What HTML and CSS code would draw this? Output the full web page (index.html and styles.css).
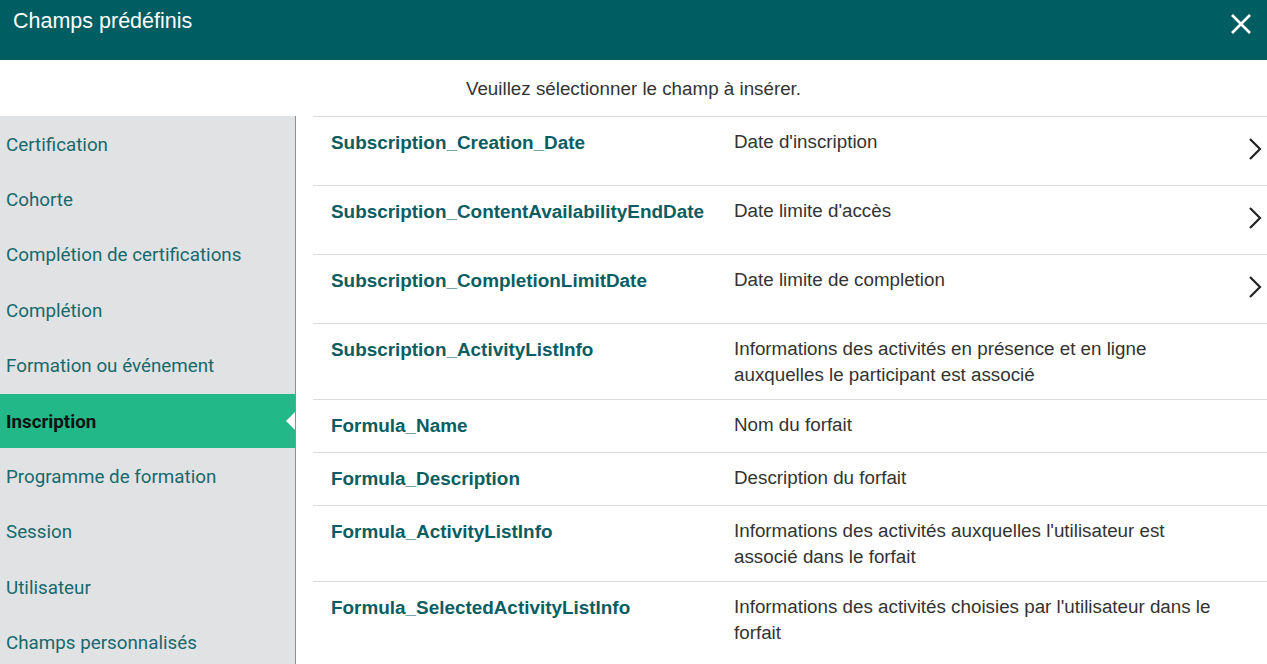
FILE: index.html
```html
<!DOCTYPE html>
<html lang="fr">
<head>
<meta charset="UTF-8">
<title>Champs prédéfinis</title>
<link rel="stylesheet" href="styles.css">
</head>
<body>
    <div class="dialog">
        <div class="dialog-header">
            <span class="dialog-title">Champs prédéfinis</span>
            <button class="close-btn" aria-label="Fermer">
                <svg width="20" height="20" viewBox="0 0 20 20">
                    <path d="M1 1 L19 19 M19 1 L1 19" stroke="#fff" stroke-width="2.6" fill="none"/>
                </svg>
            </button>
        </div>
        <div class="hint">Veuillez sélectionner le champ à insérer.</div>
        <div class="body">
            <ul class="categories">
                <li>Certification</li>
                <li>Cohorte</li>
                <li>Complétion de certifications</li>
                <li>Complétion</li>
                <li>Formation ou événement</li>
                <li class="active">Inscription</li>
                <li>Programme de formation</li>
                <li>Session</li>
                <li>Utilisateur</li>
                <li>Champs personnalisés</li>
            </ul>
            <div class="fields">
                <div class="field">
                    <div class="field-name">Subscription_Creation_Date</div>
                    <div class="field-desc">Date d'inscription</div>
                    <div class="field-more"><svg width="14" height="24" viewBox="0 0 14 24"><path d="M2 2 L12 12 L2 22" stroke="#222" stroke-width="2.2" fill="none"/></svg></div>
                </div>
                <div class="field">
                    <div class="field-name">Subscription_ContentAvailabilityEndDate</div>
                    <div class="field-desc">Date limite d'accès</div>
                    <div class="field-more"><svg width="14" height="24" viewBox="0 0 14 24"><path d="M2 2 L12 12 L2 22" stroke="#222" stroke-width="2.2" fill="none"/></svg></div>
                </div>
                <div class="field">
                    <div class="field-name">Subscription_CompletionLimitDate</div>
                    <div class="field-desc">Date limite de completion</div>
                    <div class="field-more"><svg width="14" height="24" viewBox="0 0 14 24"><path d="M2 2 L12 12 L2 22" stroke="#222" stroke-width="2.2" fill="none"/></svg></div>
                </div>
                <div class="field">
                    <div class="field-name">Subscription_ActivityListInfo</div>
                    <div class="field-desc">Informations des activités en présence et en ligne auxquelles le participant est associé</div>
                    <div class="field-more"></div>
                </div>
                <div class="field">
                    <div class="field-name">Formula_Name</div>
                    <div class="field-desc">Nom du forfait</div>
                    <div class="field-more"></div>
                </div>
                <div class="field">
                    <div class="field-name">Formula_Description</div>
                    <div class="field-desc">Description du forfait</div>
                    <div class="field-more"></div>
                </div>
                <div class="field">
                    <div class="field-name">Formula_ActivityListInfo</div>
                    <div class="field-desc">Informations des activités auxquelles l'utilisateur est associé dans le forfait</div>
                    <div class="field-more"></div>
                </div>
                <div class="field">
                    <div class="field-name">Formula_SelectedActivityListInfo</div>
                    <div class="field-desc">Informations des activités choisies par l'utilisateur dans le forfait</div>
                    <div class="field-more"></div>
                </div>
            </div>
        </div>
    </div>
</body>
</html>
```

FILE: styles.css
```css
/* Dialog layout */
body {
    margin: 0;
    font-family: "Liberation Sans", Arial, sans-serif;
    background: #fff;
    overflow: hidden;
}

.dialog-header {
    height: 60px;
    background-color: #005d62;
    display: flex;
    justify-content: space-between;
    align-items: flex-start;
    padding: 0 16px 0 13px;
}

.dialog-title {
    color: #fff;
    font-size: 21.5px;
    line-height: 26px;
    margin-top: 8px;
}

.close-btn {
    background: none;
    border: none;
    padding: 0;
    margin-top: 14px;
    cursor: pointer;
}

.hint {
    height: 56px;
    line-height: 58px;
    text-align: center;
    font-size: 18.8px;
    color: #333;
}

.body {
    display: flex;
}

/* Left categories */
.categories {
    list-style: none;
    margin: 0;
    padding: 0;
    width: 295px;
    background-color: #e1e2e4;
    border-right: 1px solid #8e8e8e;
    height: 548px;
}

.categories li {
    position: relative;
    height: 55.4px;
    box-sizing: border-box;
    display: flex;
    align-items: center;
    padding: 2px 0 0 6px;
    font-family: Roboto, sans-serif;
    font-size: 18.8px;
    color: #17696d;
}

.categories li.active {
    background-color: #22b887;
    color: #111;
    font-weight: bold;
    height: 54px;
    margin: 0.7px 0;
}

.categories li.active::after {
    content: "";
    position: absolute;
    right: 0;
    top: 50%;
    margin-top: -9px;
    border-top: 9px solid transparent;
    border-bottom: 9px solid transparent;
    border-right: 9px solid #fff;
}

/* Field table */
.fields {
    flex: 1;
    padding-left: 17px;
}

.field {
    display: grid;
    grid-template-columns: 403px 510px 1fr;
    border-top: 1px solid #dcdcdc;
}

.field-name {
    padding: 12px 0 12px 18px;
    font-size: 18.9px;
    line-height: 28px;
    font-weight: bold;
    color: #0b5d62;
}

.field-desc {
    padding: 12px 0 11px 18px;
    font-size: 18.8px;
    line-height: 26px;
    color: #333;
}

.field-more {
    display: flex;
    justify-content: flex-end;
    padding-right: 5px;
}

.field-more svg {
    margin-top: 20px;
    margin-bottom: 24px;
}
```
